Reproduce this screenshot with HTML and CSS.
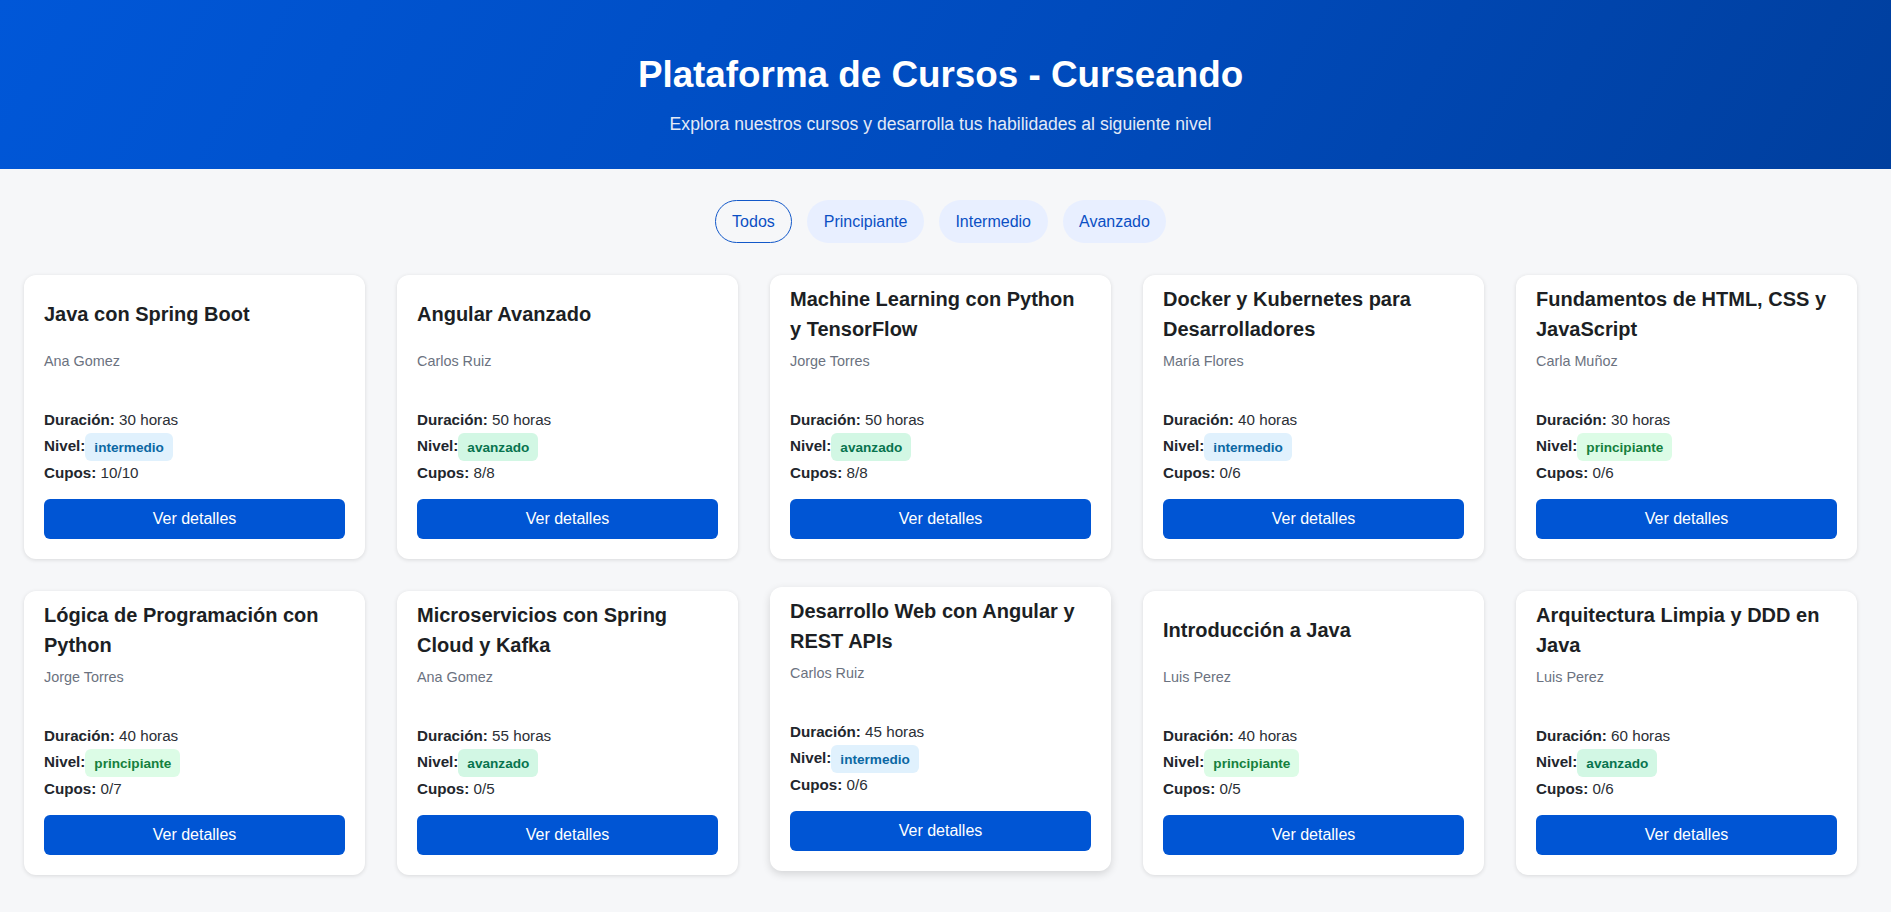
FILE: index.html
```html
<!DOCTYPE html>
<html lang="es">
<head>
<meta charset="utf-8">
<title>Plataforma de Cursos - Curseando</title>
<link rel="stylesheet" href="styles.css">
</head>
<body>
<header class="hero">
  <h1 class="hero-title">Plataforma de Cursos - Curseando</h1>
  <p class="hero-sub">Explora nuestros cursos y desarrolla tus habilidades al siguiente nivel</p>
</header>
<main class="main">
  <nav class="filters">
    <button class="filter active">Todos</button>
    <button class="filter">Principiante</button>
    <button class="filter">Intermedio</button>
    <button class="filter">Avanzado</button>
  </nav>
  <section class="grid">
    <article class="card">
      <div class="title-wrap"><h3 class="card-title">Java con Spring Boot</h3></div>
      <p class="author">Ana Gomez</p>
      <div class="details">
        <p><b>Duración:</b> 30 horas</p>
        <p><b>Nivel:</b><span class="badge intermedio">intermedio</span></p>
        <p><b>Cupos:</b> 10/10</p>
      </div>
      <button class="btn">Ver detalles</button>
    </article>
    <article class="card">
      <div class="title-wrap"><h3 class="card-title">Angular Avanzado</h3></div>
      <p class="author">Carlos Ruiz</p>
      <div class="details">
        <p><b>Duración:</b> 50 horas</p>
        <p><b>Nivel:</b><span class="badge avanzado">avanzado</span></p>
        <p><b>Cupos:</b> 8/8</p>
      </div>
      <button class="btn">Ver detalles</button>
    </article>
    <article class="card">
      <div class="title-wrap"><h3 class="card-title">Machine Learning con Python y TensorFlow</h3></div>
      <p class="author">Jorge Torres</p>
      <div class="details">
        <p><b>Duración:</b> 50 horas</p>
        <p><b>Nivel:</b><span class="badge avanzado">avanzado</span></p>
        <p><b>Cupos:</b> 8/8</p>
      </div>
      <button class="btn">Ver detalles</button>
    </article>
    <article class="card">
      <div class="title-wrap"><h3 class="card-title">Docker y Kubernetes para Desarrolladores</h3></div>
      <p class="author">María Flores</p>
      <div class="details">
        <p><b>Duración:</b> 40 horas</p>
        <p><b>Nivel:</b><span class="badge intermedio">intermedio</span></p>
        <p><b>Cupos:</b> 0/6</p>
      </div>
      <button class="btn">Ver detalles</button>
    </article>
    <article class="card">
      <div class="title-wrap"><h3 class="card-title">Fundamentos de HTML, CSS y JavaScript</h3></div>
      <p class="author">Carla Muñoz</p>
      <div class="details">
        <p><b>Duración:</b> 30 horas</p>
        <p><b>Nivel:</b><span class="badge principiante">principiante</span></p>
        <p><b>Cupos:</b> 0/6</p>
      </div>
      <button class="btn">Ver detalles</button>
    </article>
    <article class="card">
      <div class="title-wrap"><h3 class="card-title">Lógica de Programación con Python</h3></div>
      <p class="author">Jorge Torres</p>
      <div class="details">
        <p><b>Duración:</b> 40 horas</p>
        <p><b>Nivel:</b><span class="badge principiante">principiante</span></p>
        <p><b>Cupos:</b> 0/7</p>
      </div>
      <button class="btn">Ver detalles</button>
    </article>
    <article class="card">
      <div class="title-wrap"><h3 class="card-title">Microservicios con Spring Cloud y Kafka</h3></div>
      <p class="author">Ana Gomez</p>
      <div class="details">
        <p><b>Duración:</b> 55 horas</p>
        <p><b>Nivel:</b><span class="badge avanzado">avanzado</span></p>
        <p><b>Cupos:</b> 0/5</p>
      </div>
      <button class="btn">Ver detalles</button>
    </article>
    <article class="card hovered">
      <div class="title-wrap"><h3 class="card-title">Desarrollo Web con Angular y REST APIs</h3></div>
      <p class="author">Carlos Ruiz</p>
      <div class="details">
        <p><b>Duración:</b> 45 horas</p>
        <p><b>Nivel:</b><span class="badge intermedio">intermedio</span></p>
        <p><b>Cupos:</b> 0/6</p>
      </div>
      <button class="btn">Ver detalles</button>
    </article>
    <article class="card">
      <div class="title-wrap"><h3 class="card-title">Introducción a Java</h3></div>
      <p class="author">Luis Perez</p>
      <div class="details">
        <p><b>Duración:</b> 40 horas</p>
        <p><b>Nivel:</b><span class="badge principiante">principiante</span></p>
        <p><b>Cupos:</b> 0/5</p>
      </div>
      <button class="btn">Ver detalles</button>
    </article>
    <article class="card">
      <div class="title-wrap"><h3 class="card-title">Arquitectura Limpia y DDD en Java</h3></div>
      <p class="author">Luis Perez</p>
      <div class="details">
        <p><b>Duración:</b> 60 horas</p>
        <p><b>Nivel:</b><span class="badge avanzado">avanzado</span></p>
        <p><b>Cupos:</b> 0/6</p>
      </div>
      <button class="btn">Ver detalles</button>
    </article>
  </section>
</main>
</body>
</html>
```
FILE: styles.css
```css
* { box-sizing: border-box; }

body {
  margin: 0;
  font-family: "Liberation Sans", Arial, sans-serif;
  background: #f6f7f9;
  color: #1f2329;
}

.hero {
  background: linear-gradient(120deg, #0057d8 0%, #004bbd 55%, #003f9e 100%);
  color: #ffffff;
  text-align: center;
  padding: 54px 30px 35px 20px;
}

.hero-title {
  margin: 0;
  font-size: 36.8px;
  font-weight: 700;
  line-height: 42px;
}

.hero-sub {
  margin: 18px 0 0;
  font-size: 17.6px;
  line-height: 20px;
  color: #e3eaf7;
}

.main {
  padding-bottom: 40px;
}

.filters {
  display: flex;
  justify-content: center;
  gap: 15px;
  margin: 31px 0 32px;
  padding-right: 10px;
}

.filter {
  font-family: "Liberation Sans", Arial, sans-serif;
  font-size: 16px;
  line-height: 18px;
  padding: 11.5px 15.5px;
  border-radius: 22px;
  border: 1px solid transparent;
  background: #e8efff;
  color: #0b4fc4;
  cursor: pointer;
}

.filter.active {
  background: transparent;
  border-color: #1258c9;
  padding: 11.5px 16.5px;
}

.grid {
  display: grid;
  grid-template-columns: repeat(5, 1fr);
  gap: 32px;
  padding: 0 34px 0 24px;
}

.card {
  background: #ffffff;
  border-radius: 12px;
  box-shadow: 0 1px 4px rgba(0, 0, 0, 0.12);
  padding: 20px;
  display: flex;
  flex-direction: column;
}

.card.hovered {
  transform: translateY(-4px);
  box-shadow: 0 3px 8px rgba(0, 0, 0, 0.14);
}

.title-wrap {
  height: 38px;
  display: flex;
  align-items: center;
}

.card-title {
  margin: 0;
  font-size: 20px;
  line-height: 30px;
  font-weight: 700;
  color: #1c1f24;
}

.author {
  margin: 18px 0 0;
  font-size: 14.4px;
  line-height: 20px;
  color: #6b7280;
}

.details {
  margin-top: 36px;
}

.details p {
  margin: 0;
  font-size: 15.2px;
  line-height: 26px;
  color: #2b2f36;
}

.details b {
  color: #22262c;
}

.badge {
  display: inline;
  font-size: 13.6px;
  font-weight: 700;
  padding: 6.5px 9px;
  border-radius: 6px;
}

.badge.intermedio {
  background: #e0f1fd;
  color: #0b68a3;
}

.badge.avanzado {
  background: #d2f7e4;
  color: #08744f;
}

.badge.principiante {
  background: #dcfce6;
  color: #15803d;
}

.btn {
  margin-top: 13px;
  height: 40px;
  width: 100%;
  border: none;
  border-radius: 6px;
  background: #0055d4;
  color: #ffffff;
  font-family: "Liberation Sans", Arial, sans-serif;
  font-size: 16px;
  cursor: pointer;
}
```
